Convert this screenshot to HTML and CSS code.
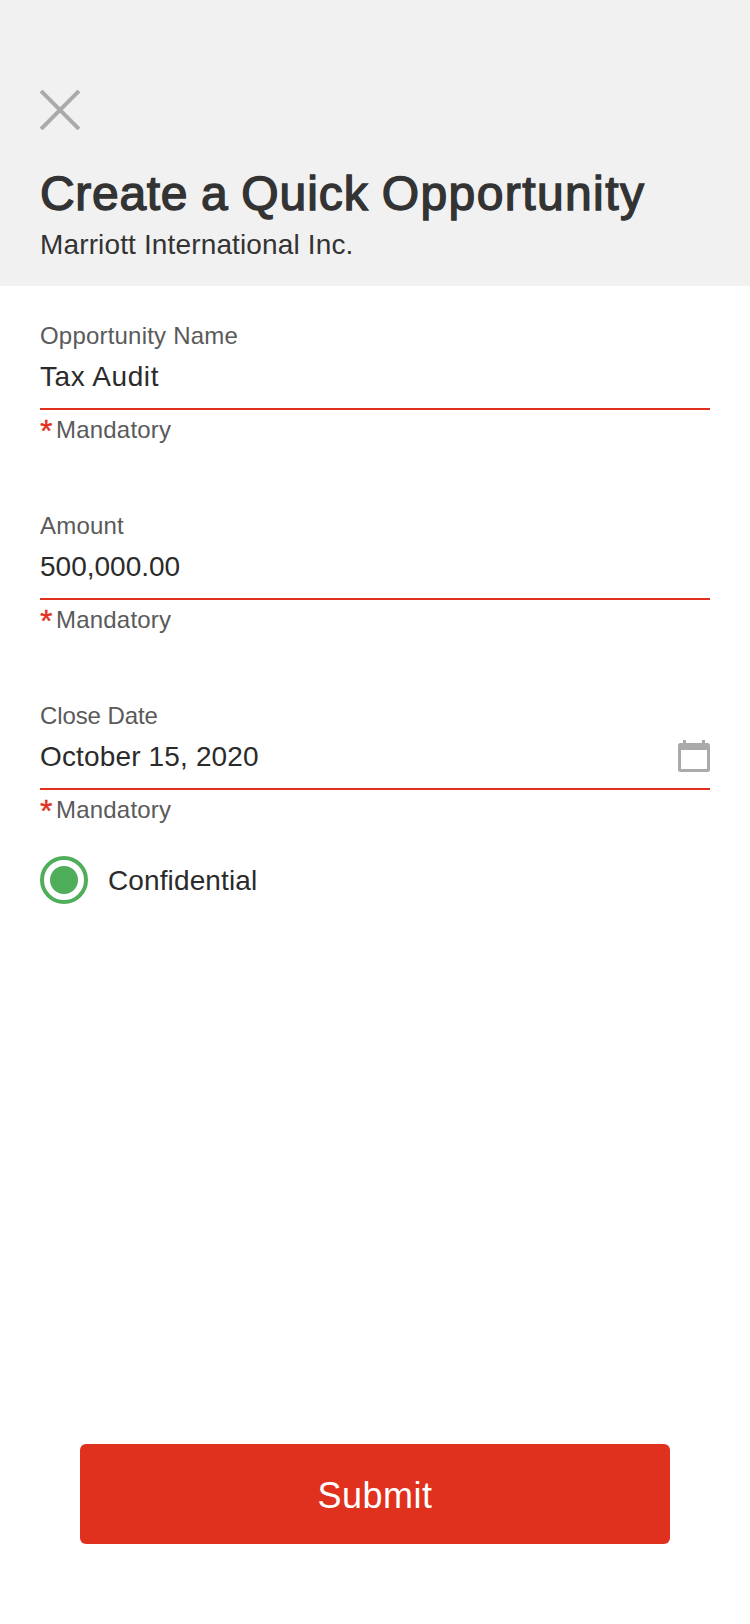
FILE: index.html
```html
<!DOCTYPE html>
<html lang="en">
<head>
<meta charset="utf-8">
<title>Create a Quick Opportunity</title>
<link rel="stylesheet" href="styles.css">
</head>
<body>
<main class="screen">
  <header class="header">
    <svg class="close" viewBox="0 0 40 40" role="img" aria-label="Close"><path d="M1 1 39 39M39 1 1 39"/></svg>
    <h1 class="title"><span class="title-tight">Create a</span> Quick <span class="title-wide">Opportunity</span></h1>
    <p class="account">Marriott International Inc.</p>
  </header>
  <section class="form">
    <div class="field">
      <div class="label label-name">Opportunity Name</div>
      <div class="value"><span class="text-name">Tax Audit</span></div>
      <div class="hint"><span class="star">*</span><span class="note">Mandatory</span></div>
    </div>
    <div class="field">
      <div class="label label-amount">Amount</div>
      <div class="value"><span class="text-amount">500,000.00</span></div>
      <div class="hint"><span class="star">*</span><span class="note">Mandatory</span></div>
    </div>
    <div class="field">
      <div class="label label-date">Close Date</div>
      <div class="value"><span class="text-date">October 15, 2020</span>
        <svg class="calendar" viewBox="0 0 32 32"><path fill-rule="evenodd" d="M5 0H8V3H24V0H27V3H29.5Q32 3 32 5.5V29.5Q32 32 29.5 32H2.5Q0 32 0 29.5V5.5Q0 3 2.5 3H5ZM3 10V29H29V10Z"/></svg>
      </div>
      <div class="hint"><span class="star">*</span><span class="note">Mandatory</span></div>
    </div>
    <div class="option"><span class="radio"></span><span class="option-text">Confidential</span></div>
  </section>
  <footer class="footer"><button class="submit">Submit</button></footer>
</main>
</body>
</html>
```
FILE: styles.css
```css
* { box-sizing: border-box; margin: 0; }
body { background: #fff; color: #2b2b2b; font-family: "Liberation Sans", Arial, sans-serif; }
.screen { display: flex; flex-direction: column; height: 1624px; }
.header { height: 286px; padding: 90px 40px 0; background: #f1f1f1; color: #333; }
.close { display: block; width: 40px; height: 40px; fill: none; stroke: #aaa; stroke-width: 4; }
.title { margin-top: 36px; font-size: 48px; line-height: 56px; font-weight: 400; letter-spacing: 0.98px; word-spacing: -1.4px; white-space: nowrap; -webkit-text-stroke: 1.4px #333; }
.title-tight { letter-spacing: 0.7px; }
.title-wide { letter-spacing: 1.4px; }
.account { margin-top: 6px; font-size: 28px; line-height: 34px; letter-spacing: 0.14px; }
.form { flex: 1; padding: 36px 40px 0; }
.field { height: 190px; }
.label { font-size: 24px; line-height: 28px; letter-spacing: 0.2px; color: #5a5a5a; }
.label-date { letter-spacing: -0.1px; }
.value { display: flex; justify-content: space-between; height: 60px; padding-top: 10px; border-bottom: 2px solid #e0311f; font-size: 28px; line-height: 34px; }
.text-name { letter-spacing: 0.6px; }
.text-date { letter-spacing: 0.15px; }
.calendar { width: 32px; height: 32px; fill: #aaa; }
.hint { display: flex; gap: 3px; margin-top: 6px; font-size: 24px; line-height: 28px; color: #5a5a5a; }
.note { letter-spacing: 0.2px; }
.star { width: 13px; height: 28px; font-size: 32px; line-height: 30px; color: #e0311f; -webkit-text-stroke: 0.4px #e0311f; }
.option { display: flex; align-items: center; gap: 20px; height: 48px; margin-top: -36px; font-size: 28px; }
.option-text { padding-top: 2px; letter-spacing: 0.12px; }
.radio { width: 48px; height: 48px; border: 4px solid #4fae5a; border-radius: 50%; background: radial-gradient(circle, #4fae5a 13.5px, #fff 14.5px); }
.footer { padding: 0 80px 80px; }
.submit { display: block; width: 590px; height: 100px; border: 0; border-radius: 6px; background: #e0311f; color: #fff; font: 36px "Liberation Sans", Arial, sans-serif; letter-spacing: 0.5px; padding: 3px 0 0; }
```
